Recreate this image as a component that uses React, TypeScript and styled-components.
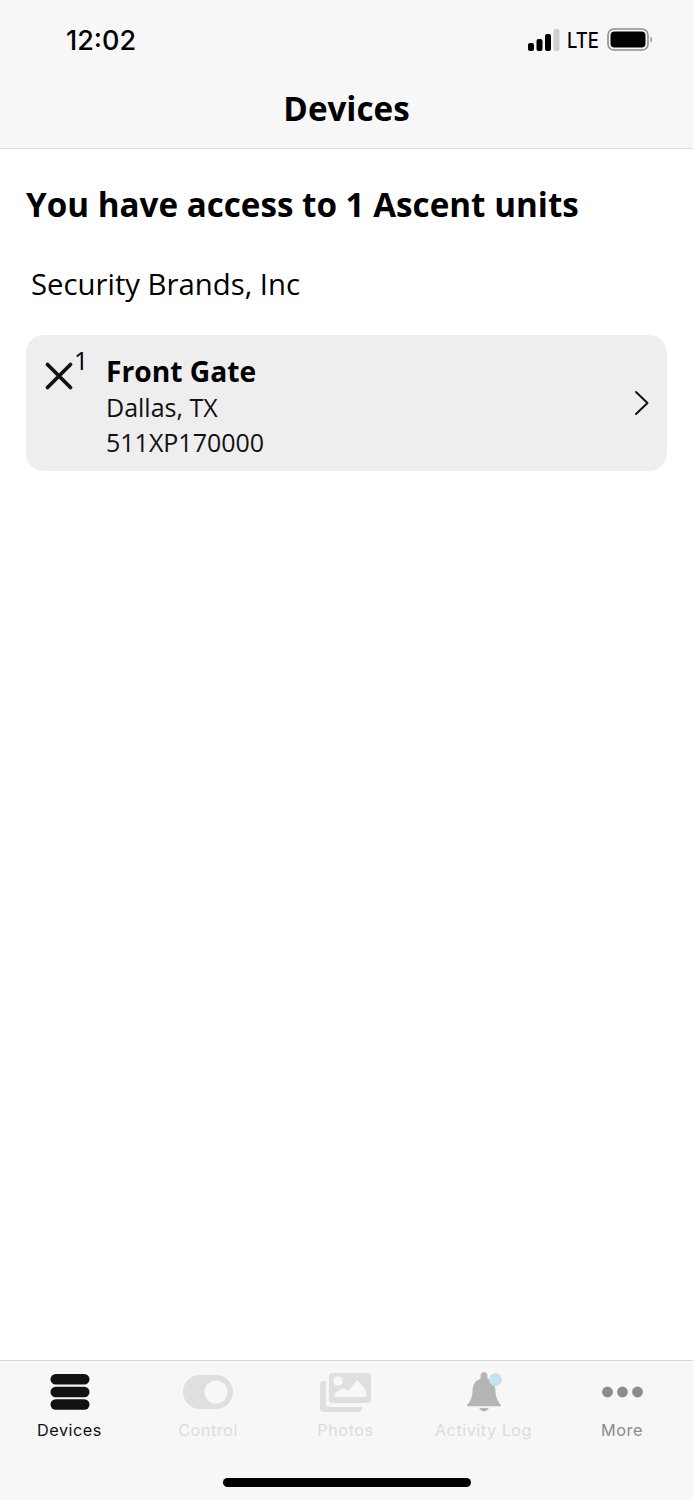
import React from "react";
import styled, { createGlobalStyle } from "styled-components";

const Global = createGlobalStyle`
  html, body { margin: 0; padding: 0; background: #fff; }
  #root { width: 693px; height: 1500px; }
`;

const Page = styled.div`
  width: 693px;
  height: 1500px;
  display: flex;
  flex-direction: column;
  overflow: hidden;
  background: #fff;
  color: #000;
  font-family: "Open Sans", "Noto Sans", sans-serif;
`;

const Header = styled.header`
  height: 148px;
  flex: none;
  background: #f7f7f7;
  border-bottom: 1px solid #d9d9d9;
  display: flex;
  flex-direction: column;
`;

const StatusBar = styled.div`
  height: 80px;
  display: flex;
  align-items: center;
  justify-content: space-between;
  padding: 0 40px 0 66px;
`;

const Clock = styled.span`
  font-family: Inter, "Liberation Sans", sans-serif;
  font-size: 27px;
  font-weight: 500;
  letter-spacing: 0;
`;

const StatusIcons = styled.div`
  display: flex;
  align-items: center;
  gap: 7px;
`;

const Lte = styled.span`
  font-family: Inter, "Liberation Sans", sans-serif;
  font-size: 21px;
  font-weight: 500;
  transform: scaleX(0.88);
  transform-origin: center;
  width: 33px;
  margin: 0 2px 0 -2px;
  text-align: center;
`;

const Title = styled.h1`
  margin: 8px 0 0;
  font-size: 33.2px;
  font-weight: 700;
  line-height: 42px;
  text-align: center;
`;

const Main = styled.main`
  flex: 1;
  display: flex;
  flex-direction: column;
  padding: 0 26px;
`;

const Heading = styled.h2`
  margin: 34px 0 0;
  font-size: 33.2px;
  line-height: 44px;
  font-weight: 700;
`;

const Company = styled.p`
  margin: 38px 0 0 5px;
  font-size: 29.3px;
  line-height: 38px;
`;

const DeviceCard = styled.div`
  margin-top: 32px;
  height: 136px;
  border-radius: 18px;
  background: #eeeeee;
  display: flex;
  padding: 0 17px 0 18px;
  align-items: center;
`;

const DeviceGlyph = styled.div`
  position: relative;
  width: 62px;
  align-self: flex-start;
  height: 60px;
  margin-top: 18px;
  flex: none;
`;

const Signal = styled.span`
  position: absolute;
  left: 30px;
  top: -10px;
  font-size: 25px;
  line-height: 34px;
`;

const DeviceText = styled.div`
  flex: 1;
  display: flex;
  flex-direction: column;
  padding-top: 6px;
`;

const DeviceName = styled.div`
  font-size: 28.2px;
  font-weight: 700;
  line-height: 38px;
`;

const DeviceLine = styled.div`
  font-size: 25px;
  line-height: 35px;
  color: #111;
`;

const TabBar = styled.nav`
  height: 140px;
  flex: none;
  box-sizing: border-box;
  background: #f7f7f7;
  border-top: 1px solid #d9d9d9;
  position: relative;
  display: grid;
  grid-template-columns: 139px 138px 137px 139px 138px;
`;

const Tab = styled.div<{ $color: string }>`
  display: flex;
  flex-direction: column;
  align-items: center;
  color: ${(p) => p.$color};
  padding-top: 9px;
`;

const TabIcon = styled.div`
  height: 44px;
  display: flex;
  align-items: center;
  justify-content: center;
`;

const TabLabel = styled.span`
  margin-top: 4px;
  font-family: Inter, "Liberation Sans", sans-serif;
  font-size: 16.3px;
  line-height: 24px;
  letter-spacing: 0.5px;
  font-weight: 400;
`;

const HomeIndicator = styled.div`
  position: absolute;
  left: 223px;
  top: 117px;
  width: 248px;
  height: 9px;
  border-radius: 5px;
  background: #000;
`;

const CrossIcon = () => (
  <svg width="30" height="30" viewBox="0 0 30 30" style={{ position: "absolute", left: 0, top: 8 }}>
    <path d="M3.5 3.5 L26.5 26.5 M26.5 3.5 L3.5 26.5" stroke="#111" strokeWidth="3.8" strokeLinecap="round" fill="none" />
  </svg>
);

const Chevron = () => (
  <svg width="16" height="26" viewBox="0 0 16 26">
    <path d="M2 2 L13.5 13 L2 24" stroke="#111" strokeWidth="2" fill="none" strokeLinecap="round" strokeLinejoin="round" />
  </svg>
);

const SignalBars = () => (
  <svg width="32" height="22" viewBox="0 0 32 22">
    <rect x="0" y="14" width="6" height="8" rx="2" fill="#000" />
    <rect x="8.5" y="10" width="6" height="12" rx="2" fill="#000" />
    <rect x="17" y="5" width="6" height="17" rx="2" fill="#000" />
    <rect x="25.5" y="0" width="6" height="22" rx="2" fill="#cfcfcf" />
  </svg>
);

const Battery = () => (
  <svg width="46" height="24" viewBox="0 0 46 24">
    <rect x="1" y="1" width="40" height="21" rx="6" fill="none" stroke="#8e8e8e" strokeWidth="1.6" />
    <rect x="3.5" y="3.5" width="35" height="16" rx="4" fill="#000" />
    <path d="M43.5 8.5 C45.5 9 45.5 14 43.5 14.5 Z" fill="#8e8e8e" />
  </svg>
);

const DevicesIcon = () => (
  <svg width="40" height="36" viewBox="0 0 40 36">
    <rect x="0.5" y="0" width="39" height="10.5" rx="5.2" fill="#111" />
    <rect x="0.5" y="12.7" width="39" height="10.5" rx="5.2" fill="#111" />
    <rect x="0.5" y="25.3" width="39" height="10.5" rx="5.2" fill="#111" />
  </svg>
);

const ControlIcon = () => (
  <svg width="50" height="34" viewBox="0 0 50 34">
    <rect x="0" y="0" width="50" height="34" rx="17" fill="#dfdfdf" />
    <circle cx="33" cy="17" r="11.5" fill="#f7f7f7" />
  </svg>
);

const PhotosIcon = () => (
  <svg width="51" height="39" viewBox="0 0 51 39">
    <path d="M6 8 v24 a2 2 0 0 0 2 2 h34 v1 a4 4 0 0 1 -4 4 H4 a4 4 0 0 1 -4 -4 V12 a4 4 0 0 1 4 -4 Z" fill="#dfdfdf" />
    <rect x="9" y="0" width="42" height="30" rx="3" fill="#dfdfdf" />
    <circle cx="18" cy="8" r="4.8" fill="#f7f7f7" />
    <path d="M15 24 V20 L23 15 L28 18 L37 7 L46 17 V24 Z" fill="#f7f7f7" />
  </svg>
);

const BellIcon = () => (
  <svg width="34" height="40" viewBox="0 0 36 42">
    <path d="M18 0 a3.6 3.6 0 0 1 3.6 3.6 V7 c7 2 8.4 8 8.6 14 c.3 6 2.5 10 5.5 13.5 V36 H0.3 V34.5 c3-3.5 5.2-7.5 5.5-13.5 c.2-6 1.6-12 8.6-14 V3.6 A3.6 3.6 0 0 1 18 0 Z" fill="#b5b5b5" />
    <path d="M13 38 h10 c-1 2.6-3 3.6-5 3.6 s-4-1-5-3.6 Z" fill="#b5b5b5" />
  </svg>
);

const Badge = styled.span`
  position: absolute;
  right: -1px;
  top: 1px;
  width: 13px;
  height: 13px;
  border-radius: 50%;
  background: #c5e2f3;
`;

const BellWrap = styled.div`
  position: relative;
  display: flex;
`;

const MoreIcon = () => (
  <svg width="41" height="12" viewBox="0 0 41 12">
    <circle cx="5.5" cy="6" r="5.4" fill="#8c8c8c" />
    <circle cx="20.5" cy="6" r="5.4" fill="#8c8c8c" />
    <circle cx="35.5" cy="6" r="5.4" fill="#8c8c8c" />
  </svg>
);

export default function App() {
  return (
    <Page>
      <Global />
      <Header>
        <StatusBar>
          <Clock>12:02</Clock>
          <StatusIcons>
            <SignalBars />
            <Lte>LTE</Lte>
            <Battery />
          </StatusIcons>
        </StatusBar>
        <Title>Devices</Title>
      </Header>
      <Main>
        <Heading>You have access to 1 Ascent units</Heading>
        <Company>Security Brands, Inc</Company>
        <DeviceCard>
          <DeviceGlyph>
            <CrossIcon />
            <Signal>1</Signal>
          </DeviceGlyph>
          <DeviceText>
            <DeviceName>Front Gate</DeviceName>
            <DeviceLine>Dallas, TX</DeviceLine>
            <DeviceLine>511XP170000</DeviceLine>
          </DeviceText>
          <Chevron />
        </DeviceCard>
      </Main>
      <TabBar>
        <Tab $color="#111">
          <TabIcon><DevicesIcon /></TabIcon>
          <TabLabel>Devices</TabLabel>
        </Tab>
        <Tab $color="#dcdcdc">
          <TabIcon><ControlIcon /></TabIcon>
          <TabLabel>Control</TabLabel>
        </Tab>
        <Tab $color="#dcdcdc">
          <TabIcon><PhotosIcon /></TabIcon>
          <TabLabel>Photos</TabLabel>
        </Tab>
        <Tab $color="#dcdcdc">
          <TabIcon>
            <BellWrap>
              <BellIcon />
              <Badge />
            </BellWrap>
          </TabIcon>
          <TabLabel>Activity Log</TabLabel>
        </Tab>
        <Tab $color="#8c8c8c">
          <TabIcon><MoreIcon /></TabIcon>
          <TabLabel>More</TabLabel>
        </Tab>
        <HomeIndicator />
      </TabBar>
    </Page>
  );
}
